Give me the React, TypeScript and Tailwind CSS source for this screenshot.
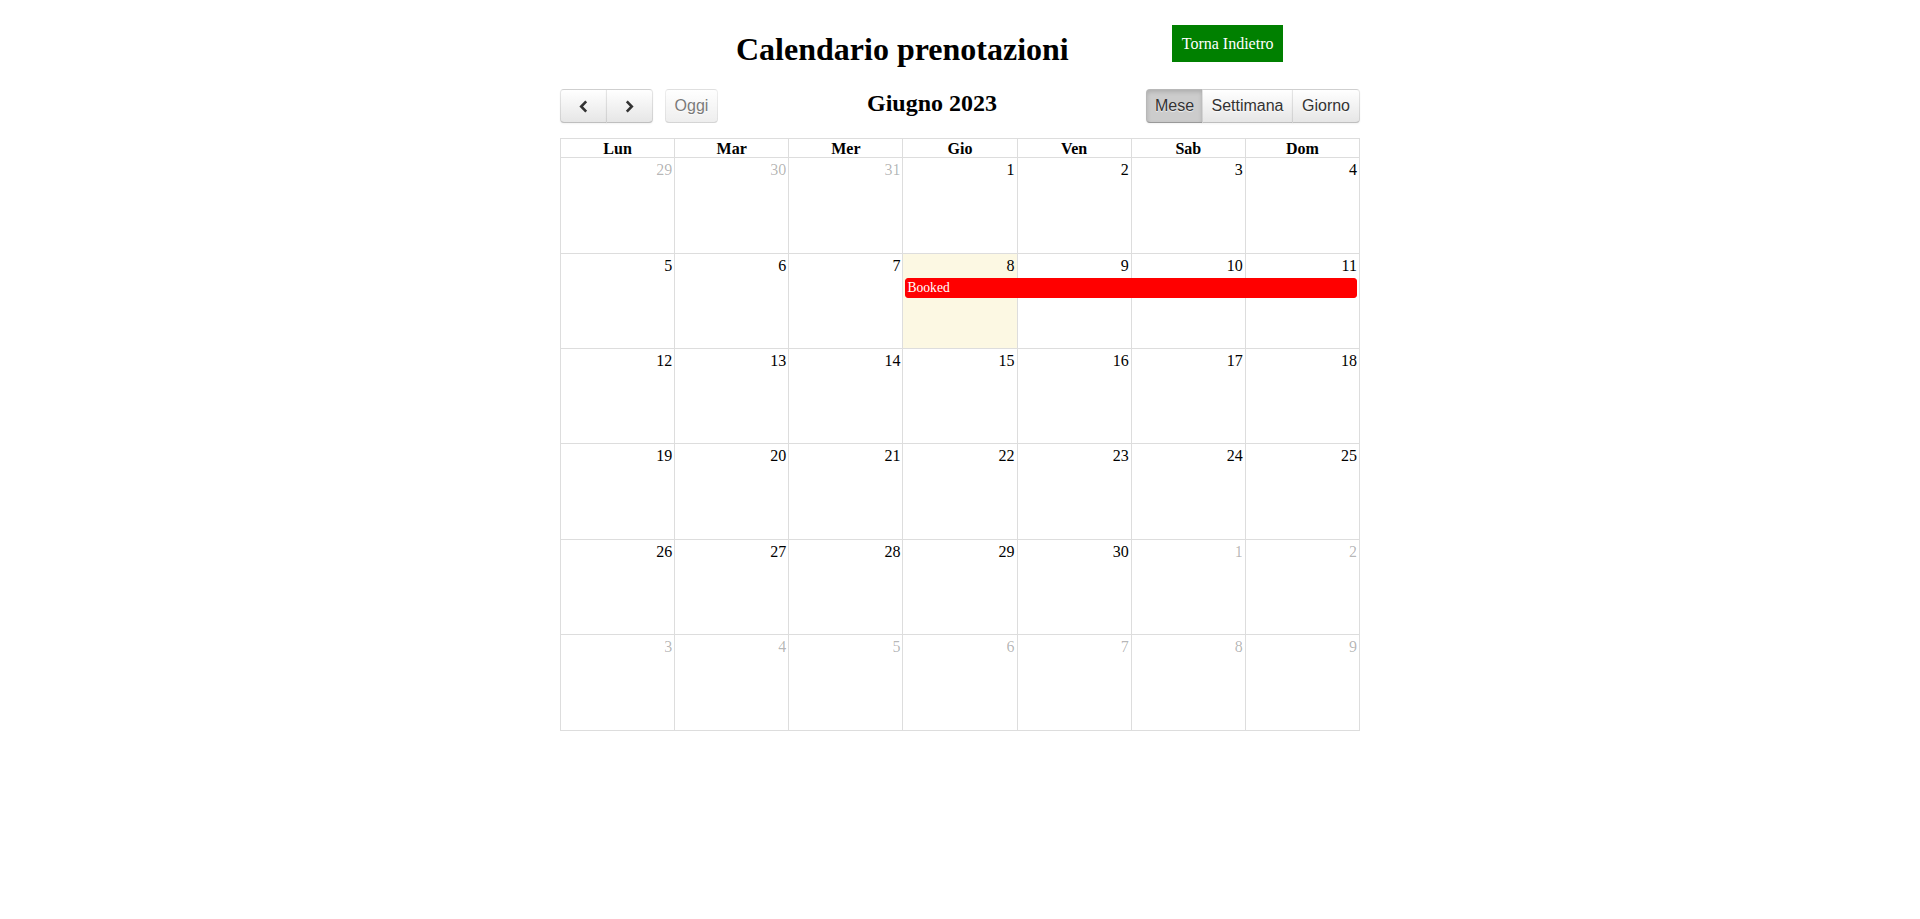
import React from "react";

type Day = { n: number; other?: boolean; today?: boolean };

const weeks: Day[][] = [
  [{ n: 29, other: true }, { n: 30, other: true }, { n: 31, other: true }, { n: 1 }, { n: 2 }, { n: 3 }, { n: 4 }],
  [{ n: 5 }, { n: 6 }, { n: 7 }, { n: 8, today: true }, { n: 9 }, { n: 10 }, { n: 11 }],
  [{ n: 12 }, { n: 13 }, { n: 14 }, { n: 15 }, { n: 16 }, { n: 17 }, { n: 18 }],
  [{ n: 19 }, { n: 20 }, { n: 21 }, { n: 22 }, { n: 23 }, { n: 24 }, { n: 25 }],
  [{ n: 26 }, { n: 27 }, { n: 28 }, { n: 29 }, { n: 30 }, { n: 1, other: true }, { n: 2, other: true }],
  [{ n: 3, other: true }, { n: 4, other: true }, { n: 5, other: true }, { n: 6, other: true }, { n: 7, other: true }, { n: 8, other: true }, { n: 9, other: true }],
];

const rowHeights = ["h-[96px]", "h-[95px]", "h-[95px]", "h-[96px]", "h-[95px]", "h-[96px]"];

const dayNames = ["Lun", "Mar", "Mer", "Gio", "Ven", "Sab", "Dom"];

const colStart = [
  "col-start-1",
  "col-start-2",
  "col-start-3",
  "col-start-4",
  "col-start-5",
  "col-start-6",
  "col-start-7",
];

const btn =
  "h-[34px] border border-black/10 border-b-black/25 text-[#333] text-[16px] leading-none font-['Liberation_Sans',Arial,sans-serif] [text-shadow:0_1px_1px_rgba(255,255,255,0.75)] flex items-center justify-center whitespace-nowrap";
const btnDefault =
  "bg-[#f5f5f5] bg-linear-to-b from-white to-[#e6e6e6] shadow-[inset_0_1px_0_rgba(255,255,255,0.2),0_1px_2px_rgba(0,0,0,0.05)]";
const btnActive =
  "bg-[#cccccc] shadow-[inset_0_2px_4px_rgba(0,0,0,0.15),0_1px_2px_rgba(0,0,0,0.05)]";

function Chevron({ dir }: { dir: "left" | "right" }) {
  return (
    <svg width="9" height="13" viewBox="0 0 9 13" fill="none">
      <path
        d={dir === "left" ? "M7.2 1.3 L2.2 6.5 L7.2 11.7" : "M1.8 1.3 L6.8 6.5 L1.8 11.7"}
        stroke="#333"
        strokeWidth="2.6"
        strokeLinecap="butt"
        strokeLinejoin="miter"
      />
    </svg>
  );
}

export default function App() {
  return (
    <div className="min-h-[919px] bg-white text-black font-['Liberation_Serif','Times_New_Roman',serif]">
      {/* Page header */}
      <div className="w-[800px] mx-auto flex items-start pl-[176px]">
        <h1 className="mt-[31px] text-[32px] leading-[37px] font-bold whitespace-nowrap">
          Calendario prenotazioni
        </h1>
        <button className="mt-[25px] ml-[103px] bg-[#008000] text-white text-[16px] leading-[19px] px-[10px] py-[9px] whitespace-nowrap font-['Liberation_Serif','Times_New_Roman',serif]">
          Torna Indietro
        </button>
      </div>

      {/* Calendar */}
      <div className="w-[800px] mx-auto mt-[21px]">
        {/* Toolbar */}
        <div className="flex items-start mb-[15px]">
          <div className="flex items-start">
            <div className="flex">
              <button className={`${btn} ${btnDefault} w-[47px] rounded-l-[4px]`}>
                <Chevron dir="left" />
              </button>
              <button className={`${btn} ${btnDefault} w-[47px] -ml-px rounded-r-[4px]`}>
                <Chevron dir="right" />
              </button>
            </div>
            <button className={`${btn} ${btnDefault} w-[53px] ml-[12px] rounded-[4px] opacity-65 shadow-none`}>
              Oggi
            </button>
          </div>
          <div className="flex-1 flex justify-center">
            <h2 className="text-[24px] leading-[28px] font-bold whitespace-nowrap">Giugno 2023</h2>
          </div>
          <div className="flex">
            <button className={`${btn} ${btnActive} w-[57px] rounded-l-[4px]`}>Mese</button>
            <button className={`${btn} ${btnDefault} w-[91px] -ml-px`}>Settimana</button>
            <button className={`${btn} ${btnDefault} w-[68px] -ml-px rounded-r-[4px]`}>Giorno</button>
          </div>
        </div>

        {/* Grid */}
        <div className="border-l border-t border-[#dddddd]">
          <div className="grid grid-cols-7">
            {dayNames.map((d) => (
              <div
                key={d}
                className="border-r border-b border-[#dddddd] text-center font-bold text-[16px] leading-[18px] pt-px h-[19px]"
              >
                {d}
              </div>
            ))}
          </div>
          {weeks.map((week, wi) => (
            <div key={wi} className={`grid grid-cols-7 grid-rows-1 ${rowHeights[wi]}`}>
              {week.map((day, di) => (
                <div
                  key={di}
                  className={`row-start-1 ${colStart[di]} border-r border-b border-[#dddddd] text-right pr-[2px] pt-[3px] text-[16px] leading-[18px] ${
                    day.today ? "bg-[#fcf8e3]" : "bg-white"
                  } ${day.other ? "text-black/30" : "text-black"}`}
                >
                  {day.n}
                </div>
              ))}
              {wi === 1 && (
                <div className="row-start-1 col-start-4 col-span-4 self-start mt-[24px] ml-[2px] mr-[3px] bg-[#ff0000] border border-[#ff0000] rounded-[3px] text-white text-[13.6px] leading-[17.7px] pl-px">
                  Booked
                </div>
              )}
            </div>
          ))}
        </div>
      </div>
    </div>
  );
}
